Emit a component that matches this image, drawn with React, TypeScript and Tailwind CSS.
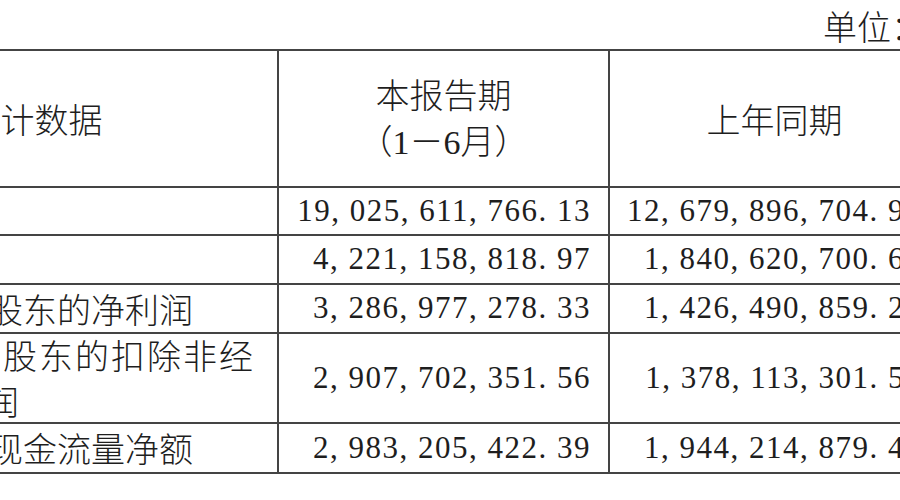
const cjk = "font-['Noto_Sans_CJK_SC',sans-serif] font-light"
const num = "font-['Liberation_Serif','Noto_Sans_CJK_SC',serif] text-[31px] tracking-[1.5px]"

type Row = {
  label: string[]
  current: string
  lastYear: string
  h: string
  wide?: boolean
}

// the right column is cut by the window edge, so its values end where the crop ends
const rows: Row[] = [
  { label: ["营业收入"], current: "19, 025, 611, 766. 13", lastYear: "12, 679, 896, 704. 9", h: "h-[48px]" },
  { label: ["利润总额"], current: "4, 221, 158, 818. 97", lastYear: "1, 840, 620, 700. 6", h: "h-[49px]" },
  { label: ["归属于上市公司股东的净利润"], current: "3, 286, 977, 278. 33", lastYear: "1, 426, 490, 859. 2", h: "h-[49px]" },
  {
    label: ["归属于上市公司股东的扣除非经", "常性损益的净利润"],
    current: "2, 907, 702, 351. 56",
    lastYear: "1, 378, 113, 301. 5",
    h: "h-[90px]",
    wide: true,
  },
  { label: ["经营活动产生的现金流量净额"], current: "2, 983, 205, 422. 39", lastYear: "1, 944, 214, 879. 4", h: "h-[50px]" },
]

const line = "border-[#444]"

export default function App() {
  return (
    <div className="w-[900px] h-[500px] overflow-hidden bg-white text-[#1e1e1e]">
      <div className="ml-[-276px] w-[1217px]">
        <div className="flex justify-end h-[49px] -mr-[18px]">
          <span className={`${cjk} text-[34px] leading-[52px] whitespace-nowrap`}>单位：元</span>
        </div>

        <div className={`grid grid-cols-[555px_331px_331px] border-t-2 ${line}`}>
          <div className={`h-[137px] flex items-center justify-center border-r-2 border-b-2 ${line} ${cjk} text-[34px]`}>
            主要会计数据
          </div>
          <div className={`h-[137px] flex flex-col items-center justify-center border-r-2 border-b-2 ${line} ${cjk} text-[34px] leading-[46px]`}>
            <span>本报告期</span>
            <span>
              （<span className="font-['Liberation_Serif',serif]">1</span>－
              <span className="font-['Liberation_Serif',serif]">6</span>月）
            </span>
          </div>
          <div className={`h-[137px] flex items-center justify-center border-r-2 border-b-2 ${line} ${cjk} text-[34px]`}>
            上年同期
          </div>

          {rows.map((r) => (
            <div key={r.current} className="contents">
              <div className={`${r.h} flex flex-col justify-center pl-[27px] border-r-2 border-b-2 ${line} ${cjk} text-[34px] leading-[46px] whitespace-nowrap`}>
                {r.label.map((t, i) => (
                  <span
                    key={t}
                    className={r.wide ? (i === 0 ? "tracking-[2px]" : "tracking-[-0.6px]") : ""}
                  >
                    {t}
                  </span>
                ))}
              </div>
              <div className={`${r.h} flex items-center justify-end pr-[17px] border-r-2 border-b-2 ${line} ${num} whitespace-nowrap`}>
                {r.current}
              </div>
              <div className={`${r.h} flex items-center justify-end pr-[34px] border-r-2 border-b-2 ${line} ${num} whitespace-nowrap`}>
                {r.lastYear}
              </div>
            </div>
          ))}
        </div>
      </div>
    </div>
  )
}
